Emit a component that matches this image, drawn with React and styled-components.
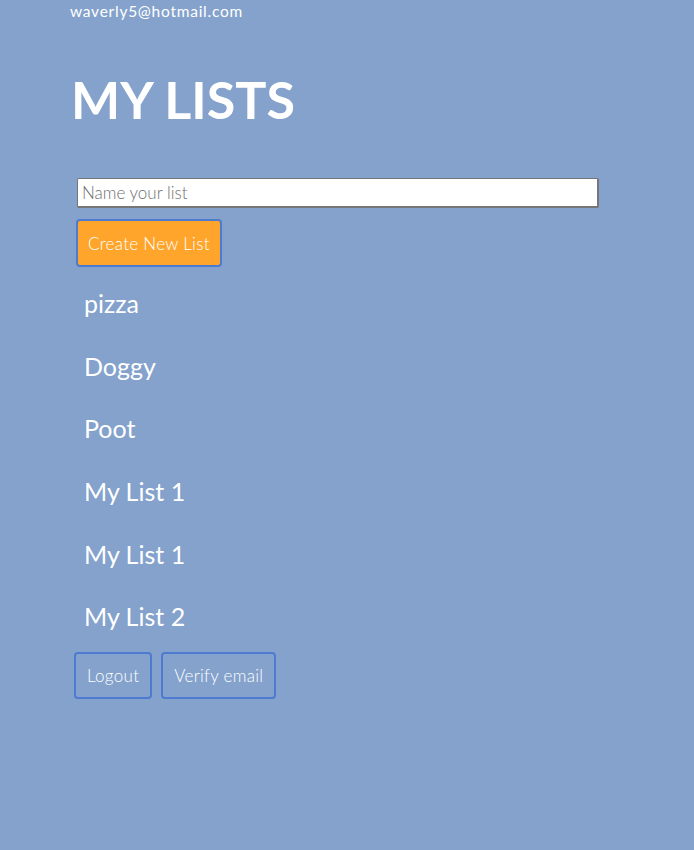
import styled, { createGlobalStyle } from "styled-components";

const Global = createGlobalStyle`
  body {
    margin: 0;
    background: #84a2cc;
    font-family: Lato, "Noto Sans", sans-serif;
    color: #fff;
  }
`;

const Page = styled.div`
  min-height: 850px;
  padding: 0 70px;
`;

const Email = styled.div`
  font-size: 15.5px;
  line-height: 22px;
  font-weight: 400;
  letter-spacing: 0.75px;
`;

const Title = styled.h1`
  margin: 44px 0 0 1px;
  font-size: 52px;
  line-height: 66px;
  font-weight: 700;
`;

const Form = styled.div`
  display: flex;
  flex-direction: column;
  align-items: flex-start;
  gap: 11px;
  margin: 46px 0 0 7px;
`;

const Input = styled.input`
  box-sizing: border-box;
  width: 522px;
  height: 30px;
  padding: 0 4px;
  border: 1px solid #767676;
  border-bottom-width: 2px;
  border-right-width: 2px;
  border-radius: 2px;
  font-family: Lato, "Noto Sans", sans-serif;
  font-size: 17px;
  font-weight: 300;
  color: #333;
  &::placeholder {
    color: #6f6f6f;
  }
`;

const Button = styled.button`
  box-sizing: border-box;
  height: ${(p) => (p.$tall ? 48 : 47)}px;
  margin-left: ${(p) => (p.$tall ? -1 : 0)}px;
  padding: 0 ${(p) => (p.$tall ? 10 : 11)}px;
  border: 2px solid #4d7bcf;
  border-radius: 4px;
  background: ${(p) => p.$bg || "transparent"};
  color: #fff;
  font-family: Lato, "Noto Sans", sans-serif;
  font-size: 17px;
  font-weight: 300;
  letter-spacing: 0.3px;
  cursor: pointer;
`;

const List = styled.div`
  display: flex;
  flex-direction: column;
  margin: 5px 0 0 14px;
`;

const Item = styled.div`
  height: 62.6px;
  display: flex;
  align-items: center;
  font-size: 25px;
  font-weight: 400;
`;

const Footer = styled.div`
  display: flex;
  gap: 9px;
  margin: 4px 0 0 4px;
`;

const lists = ["pizza", "Doggy", "Poot", "My List 1", "My List 1", "My List 2"];

export default function App() {
  return (
    <Page>
      <Global />
      <Email>waverly5@hotmail.com</Email>
      <Title>MY LISTS</Title>
      <Form>
        <Input placeholder="Name your list" />
        <Button $tall $bg="#ffa52b">Create New List</Button>
      </Form>
      <List>
        {lists.map((name, i) => (
          <Item key={i}>{name}</Item>
        ))}
      </List>
      <Footer>
        <Button>Logout</Button>
        <Button>Verify email</Button>
      </Footer>
    </Page>
  );
}
